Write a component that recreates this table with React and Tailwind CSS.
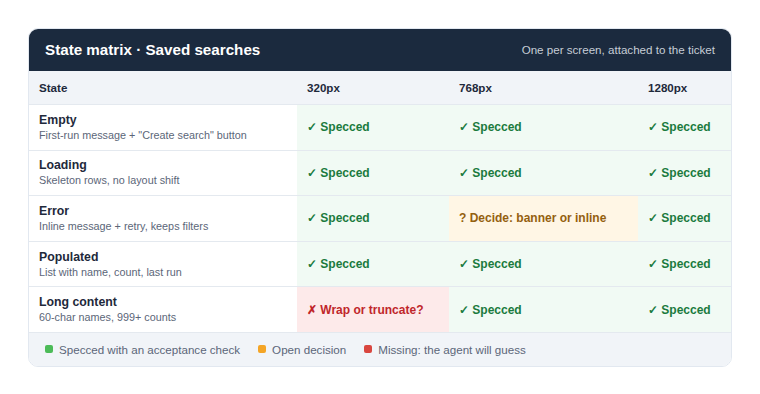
const cols = ['320px', '768px', '1280px']

const rows = [
  { name: 'Empty', note: 'First-run message + "Create search" button', cells: ['ok', 'ok', 'ok'] },
  { name: 'Loading', note: 'Skeleton rows, no layout shift', cells: ['ok', 'ok', 'ok'] },
  { name: 'Error', note: 'Inline message + retry, keeps filters', cells: ['ok', 'open', 'ok'] },
  { name: 'Populated', note: 'List with name, count, last run', cells: ['ok', 'ok', 'ok'] },
  { name: 'Long content', note: '60-char names, 999+ counts', cells: ['miss', 'ok', 'ok'] },
]

const cellStyle = {
  ok: { cls: 'bg-[#f1faf4] text-[#1b7a3e]', text: '✓ Specced' },
  open: { cls: 'bg-[#fff6e5] text-[#94600f]', text: '? Decide: banner or inline' },
  miss: { cls: 'bg-[#fdeaea] text-[#c0262a]', text: '✗ Wrap or truncate?' },
}

function Cell({ kind }) {
  const s = cellStyle[kind]
  return (
    <div className={`flex items-center pl-[10px] text-[12px] font-bold border-t border-[#e4e9ef] ${s.cls}`}>
      {s.text}
    </div>
  )
}

export default function App() {
  return (
    <div className="w-[760px] h-[394px] bg-white pt-[28px] pl-[28px]" style={{ fontFamily: '"Liberation Sans", Arial, sans-serif' }}>
      <div className="w-[704px] rounded-[10px] border border-[#e2e8f0] overflow-hidden">
        <div className="h-[42px] bg-[#1b2a3e] flex items-center justify-between pl-[16px] pr-[16px]">
          <h1 className="text-white text-[15.2px] font-bold">State matrix · Saved searches</h1>
          <span className="text-[#c6cdd6] text-[11.6px]">One per screen, attached to the ticket</span>
        </div>
        <div className="grid grid-cols-[268px_152px_189px_93px]">
          <div className="h-[33px] bg-[#f1f4f8] flex items-center pl-[10px] text-[11.6px] font-bold text-[#1e293b]">State</div>
          {cols.map(c => (
            <div key={c} className="h-[33px] bg-[#f1f4f8] flex items-center pl-[10px] text-[11.6px] font-bold text-[#1e293b]">{c}</div>
          ))}
          {rows.map(r => (
            <div key={r.name} className="contents">
              <div className="h-[45.6px] border-t border-[#e4e9ef] flex flex-col justify-center pl-[10px]">
                <div className="text-[12.3px] font-bold text-[#1e293b] leading-[15px]">{r.name}</div>
                <div className="text-[10.8px] text-[#5b6678] leading-[14px]">{r.note}</div>
              </div>
              {r.cells.map((k, i) => <Cell key={i} kind={k} />)}
            </div>
          ))}
        </div>
        <div className="h-[34px] bg-[#f1f4f8] border-t border-[#e4e9ef] flex items-center gap-[18px] pl-[16px] text-[11.6px] text-[#5b6678]">
          <span className="flex items-center gap-[6px]"><span className="w-[8px] h-[8px] rounded-[2px] bg-[#4cbb58]"></span>Specced with an acceptance check</span>
          <span className="flex items-center gap-[6px]"><span className="w-[8px] h-[8px] rounded-[2px] bg-[#f4a526]"></span>Open decision</span>
          <span className="flex items-center gap-[6px]"><span className="w-[8px] h-[8px] rounded-[2px] bg-[#d9463f]"></span>Missing: the agent will guess</span>
        </div>
      </div>
    </div>
  )
}
